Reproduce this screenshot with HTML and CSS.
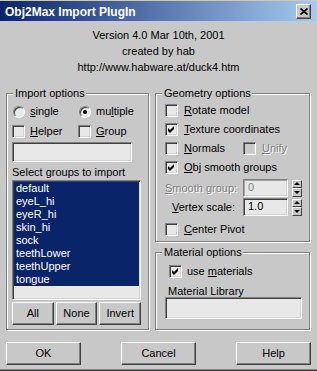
FILE: index.html
```html
<!DOCTYPE html>
<html>
<head>
<meta charset="utf-8">
<title>Obj2Max Import PlugIn</title>
<link rel="stylesheet" href="styles.css">
</head>
<body>
<div class="window">
  <div class="titlebar">
    <span class="title">Obj2Max Import PlugIn</span>
    <span class="close"><svg width="8" height="7" viewBox="0 0 8 7"><path d="M0.5 0.5L7.5 6.5M7.5 0.5L0.5 6.5" stroke="#000" stroke-width="1.7" fill="none"/></svg></span>
  </div>

  <div class="about">
    <p>Version 4.0 Mar 10th, 2001</p>
    <p>created by hab</p>
    <p>http://www.habware.at/duck4.htm</p>
  </div>

  <div class="groups">
    <section class="group g-import">
      <div class="group-title">Import options</div>
      <div class="row r-radio">
        <label class="opt w66"><span class="radio"></span><span><u>s</u>ingle</span></label>
        <label class="opt"><span class="radio on"></span><span>mu<u>l</u>tiple</span></label>
      </div>
      <div class="row r-check">
        <label class="opt w66"><span class="check"></span><span><u>H</u>elper</span></label>
        <label class="opt"><span class="check"></span><span><u>G</u>roup</span></label>
      </div>
      <div class="field f-name"></div>
      <div class="caption">Select groups to import</div>
      <ul class="list">
        <li>default</li>
        <li>eyeL_hi</li>
        <li>eyeR_hi</li>
        <li>skin_hi</li>
        <li>sock</li>
        <li>teethLower</li>
        <li>teethUpper</li>
        <li>tongue</li>
      </ul>
      <div class="btn-row">
        <span class="btn">All</span>
        <span class="btn">None</span>
        <span class="btn">Invert</span>
      </div>
    </section>

    <div class="right-col">
      <section class="group g-geo">
        <div class="group-title">Geometry options</div>
        <div class="row r-first">
          <label class="opt"><span class="check"></span><span><u>R</u>otate model</span></label>
        </div>
        <div class="row r-next">
          <label class="opt"><span class="check"><svg width="11" height="11" viewBox="0 0 11 11"><path d="M2 4L4 6L8 2V5L4 9L2 7Z" fill="#000"/></svg></span><span><u>T</u>exture coordinates</span></label>
        </div>
        <div class="row r-next">
          <label class="opt w78"><span class="check"></span><span><u>N</u>ormals</span></label>
          <label class="opt disabled"><span class="check"></span><span><u>U</u>nify</span></label>
        </div>
        <div class="row r-next">
          <label class="opt"><span class="check"><svg width="11" height="11" viewBox="0 0 11 11"><path d="M2 4L4 6L8 2V5L4 9L2 7Z" fill="#000"/></svg></span><span><u>O</u>bj smooth groups</span></label>
        </div>
        <div class="spin-row r-smooth">
          <span class="spin-label disabled"><u>S</u>mooth group:</span>
          <span class="field num dis">0</span>
          <span class="spinner"><span class="sp-up"></span><span class="sp-down"></span></span>
        </div>
        <div class="spin-row r-vertex">
          <span class="spin-label"><u>V</u>ertex scale:</span>
          <span class="field num">1.0</span>
          <span class="spinner"><span class="sp-up"></span><span class="sp-down"></span></span>
        </div>
        <div class="row r-pivot">
          <label class="opt"><span class="check"></span><span><u>C</u>enter Pivot</span></label>
        </div>
      </section>

      <section class="group g-mat">
        <div class="group-title">Material options</div>
        <div class="row r-use">
          <label class="opt"><span class="check"><svg width="11" height="11" viewBox="0 0 11 11"><path d="M2 4L4 6L8 2V5L4 9L2 7Z" fill="#000"/></svg></span><span>use <u>m</u>aterials</span></label>
        </div>
        <div class="mat-cap">Material Library</div>
        <div class="field f-lib"></div>
      </section>
    </div>
  </div>

  <div class="actions">
    <span class="btn big">OK</span>
    <span class="btn big">Cancel</span>
    <span class="btn big">Help</span>
  </div>
</div>
</body>
</html>
```

FILE: styles.css
```css
* { box-sizing: border-box; }

html, body {
  margin: 0;
  padding: 0;
}

body {
  width: 317px;
  height: 371px;
  background: #c8c8c8;
  font-family: "Liberation Sans", Arial, sans-serif;
  font-size: 11px;
  color: #000;
  overflow: hidden;
}

.window {
  width: 317px;
  height: 371px;
  padding-top: 1px;
  background: #c8c8c8;
  box-shadow: inset 0 -1px 0 #404040, inset 0 -2px 0 #808080;
}

/* title bar */
.titlebar {
  height: 20px;
  display: flex;
  align-items: center;
  padding: 1px 6px 0 5px;
  background: linear-gradient(to right, #0a246a, #a6caf0);
}

.title {
  color: #fff;
  font-weight: bold;
  font-size: 12px;
  line-height: 14px;
}

.close {
  margin-left: auto;
  width: 15px;
  height: 15px;
  margin-top: -1px;
  display: flex;
  align-items: center;
  justify-content: center;
  background: #c8c8c8;
  border: 1px solid;
  border-color: #fff #404040 #404040 #fff;
  box-shadow: inset -1px -1px 0 #808080;
}

/* about text */
.about {
  margin-top: 6px;
}

.about p {
  margin: 0;
  line-height: 16px;
  text-align: center;
}

/* groups */
.groups {
  display: grid;
  grid-template-columns: 143px 155px;
  column-gap: 6px;
  margin-top: 18px;
  padding-left: 6px;
  align-items: start;
}

.group {
  border: 1px solid #808080;
  box-shadow: inset 1px 1px 0 #fff, 1px 1px 0 #fff;
}

.group-title {
  margin-top: -7px;
  line-height: 13px;
  background: #c8c8c8;
  width: max-content;
  padding: 0 1px 0 2px;
}

.g-import {
  padding: 0 7px 4px 5px;
}

.g-import .group-title {
  margin-left: 1px;
}

.g-geo {
  padding: 0 7px 5px 9px;
}

.g-mat {
  margin-top: 10px;
  padding: 0 7px 10px 9px;
}

.g-geo .group-title,
.g-mat .group-title {
  margin-left: -3px;
}

/* option rows */
.row {
  display: flex;
  align-items: center;
  height: 13px;
  line-height: 13px;
}

.opt {
  display: flex;
  align-items: center;
  gap: 5px;
  white-space: nowrap;
}

.g-geo .opt {
  gap: 6px;
}

.w66 { width: 66px; }
.w78 { width: 78px; }

.r-radio { margin-top: 5px; padding-left: 1px; }
.r-check { margin-top: 7px; }

.r-first { margin-top: 4px; }
.r-next { margin-top: 6px; }
.r-smooth { margin-top: 5px; }
.r-vertex { margin-top: 1px; }
.r-pivot { margin-top: 7px; }

.r-use { margin-top: 6px; padding-left: 4px; }

/* controls */
.check {
  flex: none;
  width: 13px;
  height: 13px;
  border: 1px solid;
  border-color: #808080 #fff #fff #808080;
  box-shadow: inset 1px 1px 0 #404040, inset -1px -1px 0 #d4d4d4;
  background: #e8e8e8;
}

.check svg {
  display: block;
}

.radio {
  flex: none;
  width: 12px;
  height: 12px;
  border-radius: 50%;
  border: 1px solid;
  border-color: #808080 #fff #fff #808080;
  box-shadow: inset 1px 1px 0 #404040;
  background: #e8e8e8;
  display: flex;
  align-items: center;
  justify-content: center;
}

.radio.on::after {
  content: "";
  width: 4px;
  height: 4px;
  border-radius: 50%;
  background: #000;
}

.disabled {
  color: #808080;
  text-shadow: 1px 1px 0 #fff;
}

.disabled .check {
  background: #c8c8c8;
}

.field {
  display: block;
  border: 1px solid;
  border-color: #808080 #fff #fff #808080;
  box-shadow: inset 1px 1px 0 #404040, inset -1px -1px 0 #d4d4d4;
  background: #e8e8e8;
}

.f-name {
  margin-top: 4px;
  width: 120px;
  height: 20px;
}

.caption {
  margin-top: 4px;
  line-height: 13px;
}

.list {
  margin: 1px 0 0;
  padding: 1px 0 0;
  list-style: none;
  height: 120px;
  border: 1px solid;
  border-color: #808080 #fff #fff #808080;
  box-shadow: inset 1px 1px 0 #404040, inset -1px -1px 0 #d4d4d4;
  background: #e8e8e8;
}

.list li {
  margin: 0 1px;
  background: #0a246a;
  color: #fff;
  line-height: 13px;
  padding-left: 2px;
}

.btn {
  display: flex;
  align-items: center;
  justify-content: center;
  background: #c8c8c8;
  border: 1px solid;
  border-color: #fff #404040 #404040 #fff;
  box-shadow: inset -1px -1px 0 #808080;
  line-height: 13px;
}

.btn-row {
  display: flex;
  gap: 2px;
  margin-top: 2px;
  height: 23px;
}

.btn-row .btn {
  flex: 1;
}

/* spinner rows */
.spin-row {
  display: flex;
  align-items: center;
  height: 18px;
}

.spin-label {
  width: 70px;
  text-align: right;
  line-height: 13px;
  white-space: nowrap;
}

.num {
  margin-left: 8px;
  width: 45px;
  height: 18px;
  line-height: 14px;
  padding-left: 4px;
}

.num.dis {
  color: #808080;
  box-shadow: inset 1px 1px 0 #a0a0a0, inset -1px -1px 0 #d4d4d4;
}

.spinner {
  margin-left: 4px;
  width: 10px;
  height: 17px;
  display: flex;
  flex-direction: column;
}

.sp-up,
.sp-down {
  flex: 1;
  display: flex;
  align-items: center;
  justify-content: center;
  background: #c8c8c8;
  border: 1px solid;
  border-color: #fff #404040 #404040 #fff;
}

.sp-up::after {
  content: "";
  border-left: 3px solid transparent;
  border-right: 3px solid transparent;
  border-bottom: 3px solid #000;
}

.sp-down::after {
  content: "";
  border-left: 3px solid transparent;
  border-right: 3px solid transparent;
  border-top: 3px solid #000;
}

/* material */
.mat-cap {
  margin-top: 7px;
  padding-left: 3px;
  line-height: 12px;
}

.f-lib {
  width: 137px;
  height: 22px;
}

/* bottom buttons */
.actions {
  display: flex;
  justify-content: space-between;
  margin-top: 12px;
  padding: 0 6px;
}

.btn.big {
  width: 75px;
  height: 23px;
}
```
